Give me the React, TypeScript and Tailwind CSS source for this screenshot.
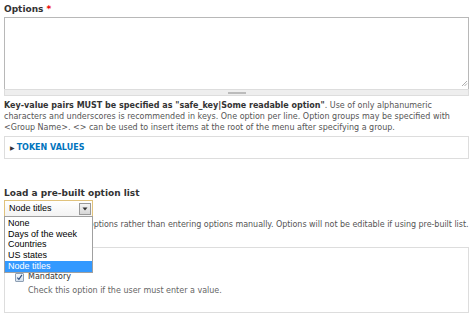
import React from "react";

const options = ["None", "Days of the week", "Countries", "US states", "Node titles"];

function ResizeCorner() {
  return (
    <svg width="7" height="7" viewBox="0 0 7 7" className="absolute right-[1px] bottom-[9px]">
      <path d="M6 1 L1 6 M6 3.5 L3.5 6" stroke="#999" strokeWidth="0.8" />
    </svg>
  );
}

function Checkbox() {
  return (
    <span className="inline-flex items-center justify-center w-[9px] h-[9px] border border-[#8e9fb3] bg-gradient-to-b from-[#f4f8fc] to-[#d5e1ee] rounded-[1px]">
      <svg width="7" height="7" viewBox="0 0 8 8">
        <path d="M1.5 4.2 L3.3 6.2 L6.8 1" stroke="#2f4f7f" strokeWidth="1.3" fill="none" />
      </svg>
    </span>
  );
}

export default function App() {
  return (
    <div className="relative w-[473px] h-[317px] overflow-hidden bg-white px-[4px] pt-[4px] font-['DejaVu_Sans',sans-serif] text-[#333]">
      {/* options textarea */}
      <div className="text-[9px] font-bold leading-[11px] h-[13px]">
        Options <span className="text-[#e00]">*</span>
      </div>
      <div className="relative w-[465px]">
        <div className="h-[72px] border border-[#b8b8b8] border-b-0 bg-white" />
        <div className="h-[7px] border border-[#ddd] bg-[#eee] flex justify-center items-center">
          <div className="w-[18px] h-[2px] bg-[#bbb]" />
        </div>
        <ResizeCorner />
      </div>
      <p className="mt-[4px] text-[8px] leading-[11px] text-[#555] w-[465px]">
        <b className="text-[#333]">Key-value pairs MUST be specified as "safe_key|Some readable option"</b>. Use of only alphanumeric
        characters and underscores is recommended in keys. One option per line. Option groups may be specified with
        &lt;Group Name&gt;. &lt;&gt; can be used to insert items at the root of the menu after specifying a group.
      </p>

      {/* token values */}
      <div className="mt-[3px] w-[465px] h-[23px] border border-[#ddd] flex items-center pl-[5px]">
        <span className="text-[#0074bd] text-[8px] font-bold flex items-center gap-[2px]">
          <span className="text-[6px] text-[#333]">▶</span>TOKEN VALUES
        </span>
      </div>

      {/* pre-built list */}
      <div className="mt-[29px] text-[9px] font-bold leading-[11px]">Load a pre-built option list</div>
      <div className="relative mt-[1px]">
        <div className="w-[89px] h-[17px] border border-[#e0c27c] bg-gradient-to-b from-white to-[#f3f3f3] flex items-center justify-between pl-[4px] pr-[1px] font-['Liberation_Sans',sans-serif] text-[9px] text-black">
          <span>Node titles</span>
          <span className="w-[12px] h-[12px] border border-[#999] bg-gradient-to-b from-[#f4f4f4] to-[#d6d6d6] flex items-center justify-center">
            <svg width="6" height="4" viewBox="0 0 6 4">
              <path d="M0.5 0.5 H5.5 L3 3.5 Z" fill="#333" />
            </svg>
          </span>
        </div>
        <div className="absolute left-0 top-[16px] z-10 w-[89px] border border-[#a0a0a0] bg-white font-['Liberation_Sans',sans-serif] text-[9px] leading-[10.7px] text-black pt-[1px]">
          {options.map((o) => (
            <div key={o} className={"pl-[3px] " + (o === "Node titles" ? "bg-[#3399ff] text-white" : "")}>
              {o}
            </div>
          ))}
        </div>
      </div>
      <p className="mt-[2px] text-[8px] leading-[11px] text-[#555] whitespace-nowrap tracking-[-0.04px]">
        Use a pre-built list of options rather than entering options manually. Options will not be editable if using pre-built list.
      </p>

      {/* validation */}
      <div className="mt-[17px] w-[465px] h-[66px] border border-[#ddd] pl-[10px] pt-[24px]">
        <label className="flex items-center gap-[4px] text-[8px] leading-[10px] text-[#333]">
          <Checkbox />
          Mandatory
        </label>
        <p className="mt-[3px] pl-[13px] text-[8px] leading-[11px] text-[#666]">Check this option if the user must enter a value.</p>
      </div>
    </div>
  );
}
